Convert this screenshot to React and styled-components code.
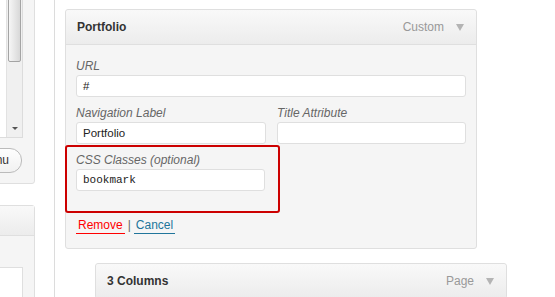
import React from "react"
import styled, { createGlobalStyle } from "styled-components"

const GlobalStyle = createGlobalStyle`
  html, body {
    margin: 0;
    padding: 0;
    background: #ffffff;
  }
  body {
    font-family: "Liberation Sans", Arial, sans-serif;
    font-size: 12px;
    color: #333;
  }
`

const Page = styled.div`
  display: flex;
  width: 555px;
  height: 297px;
  overflow: hidden;
`

const Sidebar = styled.div`
  width: 35px;
  flex-shrink: 0;
  overflow: hidden;
  display: flex;
  flex-direction: column;
`

const SideBox = styled.div`
  width: 240px;
  margin-left: -205px;
  margin-top: ${props => props.top || "0"};
  background: #f5f5f5;
  border: 1px solid #dfdfdf;
  border-radius: 3px;
  box-sizing: border-box;
`

const SideInner = styled.div`
  padding: ${props => props.pad || "0 11px 10px 11px"};
`

const ListBox = styled.div`
  display: flex;
  height: 158px;
  background: #fff;
  border: 1px solid #dcdcdc;
  border-top: none;
  box-sizing: border-box;
`

const ListArea = styled.div`
  flex: 1;
`

const Scrollbar = styled.div`
  width: 16px;
  background: #f0f0f0;
  border-left: 1px solid #e2e2e2;
  display: flex;
  flex-direction: column;
  justify-content: space-between;
  align-items: center;
  padding-bottom: 7px;
  box-sizing: border-box;
`

const Thumb = styled.div`
  width: 13px;
  height: 82px;
  box-sizing: border-box;
  border: 1px solid #a4a4a4;
  border-radius: 2px;
  background: linear-gradient(to right, #f6f6f6, #d8d8d8);
`

const ArrowDown = styled.div`
  width: 0;
  height: 0;
  border-left: 3px solid transparent;
  border-right: 3px solid transparent;
  border-top: 3px solid #555;
`

const ButtonRow = styled.div`
  display: flex;
  justify-content: flex-end;
  margin-top: 10px;
  padding-right: 1px;
`

const PillButton = styled.div`
  height: 25px;
  line-height: 23px;
  box-sizing: border-box;
  padding: 0 12px;
  border: 1px solid #bbb;
  border-radius: 12px;
  background: linear-gradient(#fefefe, #f1f1f1);
  font-size: 12px;
  color: #333;
  white-space: nowrap;
`

const SideHead = styled.div`
  height: 29px;
  background: linear-gradient(#f9f9f9, #ececec);
  border-bottom: 1px solid #dfdfdf;
`

const InnerBox = styled.div`
  height: 60px;
  margin-top: 31px;
  margin-right: 11px;
  background: #fff;
  border: 1px solid #dfdfdf;
`

const Main = styled.div`
  margin-left: 19px;
  border-left: 1px solid #dcdcdc;
  padding: 9px 0 0 10px;
  flex: 1;
`

const ItemPanel = styled.div`
  width: 412px;
  margin-left: ${props => props.indent || "0"};
  margin-top: ${props => props.top || "0"};
  box-sizing: border-box;
  border: 1px solid #dfdfdf;
  border-radius: 3px;
  background: #f5f5f5;
`

const ItemHead = styled.div`
  height: 34px;
  display: flex;
  align-items: center;
  justify-content: space-between;
  padding: 0 11px 0 11px;
  background: linear-gradient(#f9f9f9, #ececec);
  border-bottom: ${props => (props.open ? "1px solid #dfdfdf" : "none")};
  border-radius: 3px 3px 0 0;
`

const ItemTitle = styled.span`
  font-weight: bold;
  font-size: 12px;
  color: #333;
`

const ItemControls = styled.span`
  display: flex;
  align-items: center;
  gap: 12px;
  color: #999;
  font-size: 12px;
`

const Toggle = styled.span`
  width: 0;
  height: 0;
  border-left: 4px solid transparent;
  border-right: 4px solid transparent;
  border-top: 7px solid #b4b4b4;
  margin-right: 1px;
`

const ItemBody = styled.div`
  padding: 13px 10px 14px 10px;
`

const Field = styled.div`
  margin-top: ${props => props.top || "0"};
`

const Label = styled.label`
  display: block;
  font-style: italic;
  font-size: 12px;
  line-height: 16px;
  color: #666;
  margin-bottom: 1px;
`

const Input = styled.div`
  height: 22px;
  box-sizing: border-box;
  background: #fff;
  border: 1px solid #dfdfdf;
  border-radius: 3px;
  padding: 0 6px;
  line-height: 20px;
  font-size: ${props => (props.mono ? "11px" : "11.5px")};
  font-family: ${props =>
    props.mono ? '"Liberation Mono", "Courier New", monospace' : "inherit"};
  color: #222;
`

const TwoCols = styled.div`
  display: grid;
  grid-template-columns: 190px 189px;
  gap: 11px;
  margin-top: 8px;
`

const Highlight = styled.div`
  width: 215px;
  box-sizing: border-box;
  margin: 1px 0 0 -11px;
  padding: 5px 13px 20px 9px;
  border: 2px solid #cc0000;
  border-radius: 3px;
`

const Actions = styled.div`
  display: flex;
  align-items: flex-start;
  margin-top: 4px;
  font-size: 12px;
  line-height: 16px;
`

const ActionLink = styled.a`
  color: ${props => (props.danger ? "#ff0000" : "#21759b")};
  border-bottom: 1px solid ${props => (props.danger ? "#ff0000" : "#21759b")};
  padding: 0 2px;
  text-decoration: none;
`

const Sep = styled.span`
  color: #666;
  padding: 0 3px 0 3px;
`

const App = () => {
  return (
    <Page>
      <GlobalStyle />
      <Sidebar>
        <SideBox top="-21px">
          <SideInner>
            <ListBox>
              <ListArea />
              <Scrollbar>
                <Thumb />
                <ArrowDown />
              </Scrollbar>
            </ListBox>
            <ButtonRow>
              <PillButton>Add to Menu</PillButton>
            </ButtonRow>
          </SideInner>
        </SideBox>
        <SideBox top="21px">
          <SideHead />
          <SideInner pad="0">
            <InnerBox />
          </SideInner>
        </SideBox>
      </Sidebar>
      <Main>
        <ItemPanel>
          <ItemHead open>
            <ItemTitle>Portfolio</ItemTitle>
            <ItemControls>
              Custom
              <Toggle />
            </ItemControls>
          </ItemHead>
          <ItemBody>
            <Field>
              <Label>URL</Label>
              <Input>#</Input>
            </Field>
            <TwoCols>
              <Field>
                <Label>Navigation Label</Label>
                <Input>Portfolio</Input>
              </Field>
              <Field>
                <Label>Title Attribute</Label>
                <Input />
              </Field>
            </TwoCols>
            <Highlight>
              <Label>CSS Classes (optional)</Label>
              <Input mono>bookmark</Input>
            </Highlight>
            <Actions>
              <ActionLink danger href="#">Remove</ActionLink>
              <Sep>|</Sep>
              <ActionLink href="#">Cancel</ActionLink>
            </Actions>
          </ItemBody>
        </ItemPanel>
        <ItemPanel indent="30px" top="14px">
          <ItemHead>
            <ItemTitle>3 Columns</ItemTitle>
            <ItemControls>
              Page
              <Toggle />
            </ItemControls>
          </ItemHead>
        </ItemPanel>
      </Main>
    </Page>
  )
}

export default App
